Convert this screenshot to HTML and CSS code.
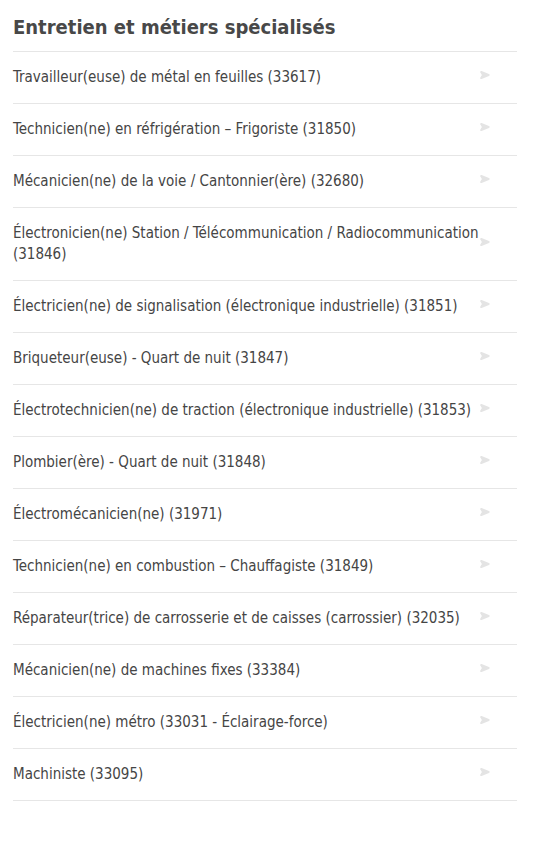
FILE: index.html
```html
<!DOCTYPE html>
<html lang="fr">
<head>
<meta charset="utf-8">
<title>Entretien et métiers spécialisés</title>
<link rel="stylesheet" href="styles.css">
</head>
<body>
<section class="panel">
  <h2 class="title">Entretien et métiers spécialisés</h2>
  <ul class="list">
    <li class="item"><a class="link" href="#"><span class="label">Travailleur(euse) de métal en feuilles (33617)</span><svg class="chev" viewBox="0 0 10 8" width="10" height="8"><path d="M1.2 1 L8.6 4 L1.2 7 L3 4 Z" fill="#e4e4e4" stroke="#e4e4e4" stroke-width="2" stroke-linejoin="round"/></svg></a></li>
    <li class="item"><a class="link" href="#"><span class="label">Technicien(ne) en réfrigération – Frigoriste (31850)</span><svg class="chev" viewBox="0 0 10 8" width="10" height="8"><path d="M1.2 1 L8.6 4 L1.2 7 L3 4 Z" fill="#e4e4e4" stroke="#e4e4e4" stroke-width="2" stroke-linejoin="round"/></svg></a></li>
    <li class="item"><a class="link" href="#"><span class="label">Mécanicien(ne) de la voie / Cantonnier(ère) (32680)</span><svg class="chev" viewBox="0 0 10 8" width="10" height="8"><path d="M1.2 1 L8.6 4 L1.2 7 L3 4 Z" fill="#e4e4e4" stroke="#e4e4e4" stroke-width="2" stroke-linejoin="round"/></svg></a></li>
    <li class="item"><a class="link" href="#"><span class="label">Électronicien(ne) Station / Télécommunication / Radiocommunication (31846)</span><svg class="chev" viewBox="0 0 10 8" width="10" height="8"><path d="M1.2 1 L8.6 4 L1.2 7 L3 4 Z" fill="#e4e4e4" stroke="#e4e4e4" stroke-width="2" stroke-linejoin="round"/></svg></a></li>
    <li class="item"><a class="link" href="#"><span class="label">Électricien(ne) de signalisation (électronique industrielle) (31851)</span><svg class="chev" viewBox="0 0 10 8" width="10" height="8"><path d="M1.2 1 L8.6 4 L1.2 7 L3 4 Z" fill="#e4e4e4" stroke="#e4e4e4" stroke-width="2" stroke-linejoin="round"/></svg></a></li>
    <li class="item"><a class="link" href="#"><span class="label">Briqueteur(euse) - Quart de nuit (31847)</span><svg class="chev" viewBox="0 0 10 8" width="10" height="8"><path d="M1.2 1 L8.6 4 L1.2 7 L3 4 Z" fill="#e4e4e4" stroke="#e4e4e4" stroke-width="2" stroke-linejoin="round"/></svg></a></li>
    <li class="item"><a class="link" href="#"><span class="label">Électrotechnicien(ne) de traction (électronique industrielle) (31853)</span><svg class="chev" viewBox="0 0 10 8" width="10" height="8"><path d="M1.2 1 L8.6 4 L1.2 7 L3 4 Z" fill="#e4e4e4" stroke="#e4e4e4" stroke-width="2" stroke-linejoin="round"/></svg></a></li>
    <li class="item"><a class="link" href="#"><span class="label">Plombier(ère) - Quart de nuit (31848)</span><svg class="chev" viewBox="0 0 10 8" width="10" height="8"><path d="M1.2 1 L8.6 4 L1.2 7 L3 4 Z" fill="#e4e4e4" stroke="#e4e4e4" stroke-width="2" stroke-linejoin="round"/></svg></a></li>
    <li class="item"><a class="link" href="#"><span class="label">Électromécanicien(ne) (31971)</span><svg class="chev" viewBox="0 0 10 8" width="10" height="8"><path d="M1.2 1 L8.6 4 L1.2 7 L3 4 Z" fill="#e4e4e4" stroke="#e4e4e4" stroke-width="2" stroke-linejoin="round"/></svg></a></li>
    <li class="item"><a class="link" href="#"><span class="label">Technicien(ne) en combustion – Chauffagiste (31849)</span><svg class="chev" viewBox="0 0 10 8" width="10" height="8"><path d="M1.2 1 L8.6 4 L1.2 7 L3 4 Z" fill="#e4e4e4" stroke="#e4e4e4" stroke-width="2" stroke-linejoin="round"/></svg></a></li>
    <li class="item"><a class="link" href="#"><span class="label">Réparateur(trice) de carrosserie et de caisses (carrossier) (32035)</span><svg class="chev" viewBox="0 0 10 8" width="10" height="8"><path d="M1.2 1 L8.6 4 L1.2 7 L3 4 Z" fill="#e4e4e4" stroke="#e4e4e4" stroke-width="2" stroke-linejoin="round"/></svg></a></li>
    <li class="item"><a class="link" href="#"><span class="label">Mécanicien(ne) de machines fixes (33384)</span><svg class="chev" viewBox="0 0 10 8" width="10" height="8"><path d="M1.2 1 L8.6 4 L1.2 7 L3 4 Z" fill="#e4e4e4" stroke="#e4e4e4" stroke-width="2" stroke-linejoin="round"/></svg></a></li>
    <li class="item"><a class="link" href="#"><span class="label">Électricien(ne) métro (33031 - Éclairage-force)</span><svg class="chev" viewBox="0 0 10 8" width="10" height="8"><path d="M1.2 1 L8.6 4 L1.2 7 L3 4 Z" fill="#e4e4e4" stroke="#e4e4e4" stroke-width="2" stroke-linejoin="round"/></svg></a></li>
    <li class="item"><a class="link" href="#"><span class="label">Machiniste (33095)</span><svg class="chev" viewBox="0 0 10 8" width="10" height="8"><path d="M1.2 1 L8.6 4 L1.2 7 L3 4 Z" fill="#e4e4e4" stroke="#e4e4e4" stroke-width="2" stroke-linejoin="round"/></svg></a></li>
  </ul>
</section>
</body>
</html>
```

FILE: styles.css
```css
html, body {
  margin: 0;
  padding: 0;
  background: #ffffff;
}

body {
  font-family: "DejaVu Sans Condensed", "DejaVu Sans", "Liberation Sans", sans-serif;
  font-stretch: condensed;
  color: #454545;
}

.panel {
  padding: 0 19px 0 13px;
}

.title {
  margin: 0;
  padding: 14px 0 11px;
  font-size: 20px;
  line-height: 26px;
  font-weight: bold;
  color: #484848;
  border-bottom: 1px solid #e6e6e6;
}

.list {
  list-style: none;
  margin: 0;
  padding: 0;
}

.item {
  border-bottom: 1px solid #e6e6e6;
}

.link {
  display: flex;
  align-items: center;
  justify-content: space-between;
  gap: 0;
  padding: 15px 27px 15px 0;
  text-decoration: none;
  color: #454545;
  font-size: 15px;
  line-height: 21px;
}

.label {
  flex: 1;
}

.chev {
  flex: none;
  display: block;
  margin-left: -5px;
  margin-bottom: 5px;
}
```
